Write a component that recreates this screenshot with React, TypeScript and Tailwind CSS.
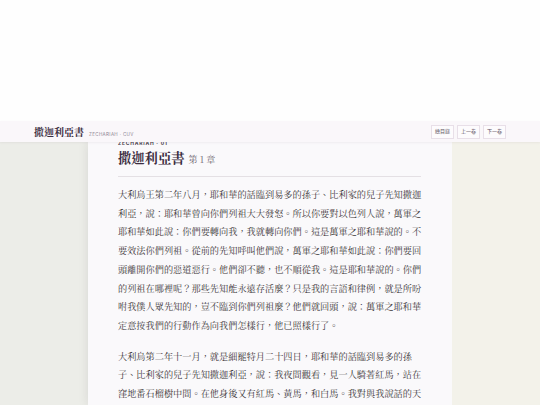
import React from 'react';

const serif = "font-['Noto_Serif_CJK_TC','Noto_Sans_CJK_TC','Liberation_Serif',serif]";
const sans = "font-['Inter','Noto_Sans_CJK_TC',sans-serif]";

const paragraphs = [
  '大利烏王第二年八月，耶和華的話臨到易多的孫子、比利家的兒子先知撒迦利亞，說：耶和華曾向你們列祖大大發怒。所以你要對以色列人說，萬軍之耶和華如此說：你們要轉向我，我就轉向你們。這是萬軍之耶和華說的。不要效法你們列祖。從前的先知呼叫他們說，萬軍之耶和華如此說：你們要回頭離開你們的惡道惡行。他們卻不聽，也不順從我。這是耶和華說的。你們的列祖在哪裡呢？那些先知能永遠存活麼？只是我的言語和律例，就是所吩咐我僕人眾先知的，豈不臨到你們列祖麼？他們就回頭，說：萬軍之耶和華定意按我們的行動作為向我們怎樣行，他已照樣行了。',
  '大利烏第二年十一月，就是細罷特月二十四日，耶和華的話臨到易多的孫子、比利家的兒子先知撒迦利亞，說：我夜間觀看，見一人騎著紅馬，站在窪地番石榴樹中間。在他身後又有紅馬、黃馬，和白馬。我對與我說話的天使說：我主啊，這是甚麼意思？與我說話的天使說：我要指示你這是甚麼意思。',
];

function NavButton({ label }: { label: string }) {
  return (
    <button className={`h-[14px] w-[23px] flex items-center justify-center border border-[#e8dfe8] bg-[#fdfbfd] text-[5px] leading-none text-[#5a4f5c] ${sans}`}>
      {label}
    </button>
  );
}

export default function App() {
  return (
    <div className="w-[540px] h-[405px] overflow-hidden bg-[#fefefe]">
      {/* blank area above */}
      <div className="h-[121px]" />

      {/* Header */}
      <header className="relative z-10 h-[21px] flex items-center justify-between pl-[34px] pr-[34px] bg-[#faf7fa] shadow-[0_1px_2px_rgba(60,40,60,0.06)]">
        <div className="flex items-baseline gap-[5px]">
          <span className={`text-[10px] font-bold text-[#3b2c40] ${serif}`}>撒迦利亞書</span>
          <span className={`text-[4.5px] tracking-[0.08em] text-[#8a8290] ${sans}`}>ZECHARIAH · CUV</span>
        </div>
        <div className="flex gap-[3px]">
          <NavButton label="總目錄" />
          <NavButton label="上一卷" />
          <NavButton label="下一卷" />
        </div>
      </header>

      {/* Body */}
      <div className="flex h-[263px]">
        <div className="w-[88px] bg-[#ecede8]" />
        <main className="w-[364px] bg-[#faf9fb] shadow-[0_0_10px_rgba(40,30,40,0.10)] px-[30px]">
          <div className={`-mt-[3px] text-[5px] leading-[8px] font-bold tracking-[0.15em] text-[#4a3f4d] ${sans}`}>
            ZECHARIAH · 01
          </div>
          <h1 className={`mt-[1px] flex items-baseline gap-[4px] leading-[20px] ${serif}`}>
            <span className="text-[13.3px] font-bold text-[#3b2c40]">撒迦利亞書</span>
            <span className="text-[9px] text-[#6a5e6c]">第 1 章</span>
          </h1>
          <div className="mt-[6px] h-px w-[303px] bg-[#e4e0e4]" />
          <div className={`mt-[8px] w-[304px] text-[9.2px] leading-[18.7px] text-[#3a3638] ${serif}`}>
            {paragraphs.map((p, i) => (
              <p key={i} className={i > 0 ? 'mt-[12px]' : ''}>
                {p}
              </p>
            ))}
          </div>
        </main>
        <div className="flex-1 bg-[#f3f2ea]" />
      </div>
    </div>
  );
}
